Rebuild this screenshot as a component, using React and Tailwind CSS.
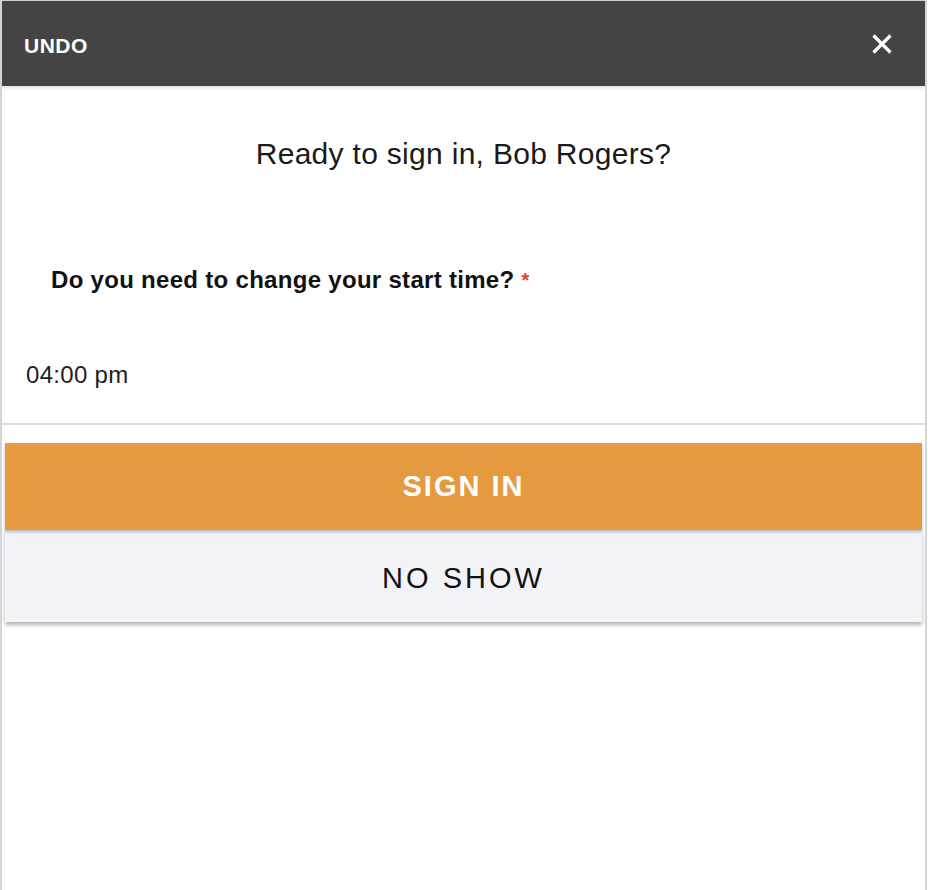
import React from "react";

export default function App() {
  return (
    <div className="w-[927px] h-[890px] bg-white border-l-2 border-r-2 border-[#d4d4d4] font-['Liberation_Sans',Arial,sans-serif] overflow-hidden">
      <div className="h-[86px] bg-[#444444] border-t border-[#cfcfcf] flex items-center justify-between pl-[22px] pr-[32px] shadow-[0_2px_3px_rgba(0,0,0,0.12)]">
        <span className="text-white font-bold text-[21px] tracking-[0.5px] mt-[5px]">UNDO</span>
        <svg width="22" height="22" viewBox="0 0 22 22">
          <path d="M2.5 2.5 L19.5 19.5 M19.5 2.5 L2.5 19.5" stroke="white" strokeWidth="3.2" strokeLinecap="butt" />
        </svg>
      </div>
      <div className="pt-[50px] text-center text-[30px] tracking-[0.3px] text-[#1a1a1a] leading-[36px]">
        Ready to sign in, Bob Rogers?
      </div>
      <div className="mt-[95px] pl-[49px] text-[24px] tracking-[0.3px] font-bold text-[#111] leading-[26px]">
        Do you need to change your start time? <span className="text-[#e53935] text-[20px] align-top">*</span>
      </div>
      <div className="mt-[69px] pl-[24px] text-[24px] tracking-[0.3px] text-[#222] leading-[26px]">04:00 pm</div>
      <div className="mt-[35px] border-b-2 border-[#dcdcdc]"></div>
      <div className="mt-[18px] mx-[3px] flex flex-col">
        <div className="h-[87px] bg-[#e69a40] flex items-center justify-center text-white font-bold text-[29px] tracking-[2px] shadow-[0_2px_3px_rgba(0,0,0,0.25)] relative z-10">
          SIGN IN
        </div>
        <div className="h-[92px] bg-[#f2f3f7] flex items-center justify-center pt-[6px] text-[#111] text-[29px] tracking-[3px] shadow-[0_3px_4px_rgba(0,0,0,0.3)]">
          NO SHOW
        </div>
      </div>
    </div>
  );
}
